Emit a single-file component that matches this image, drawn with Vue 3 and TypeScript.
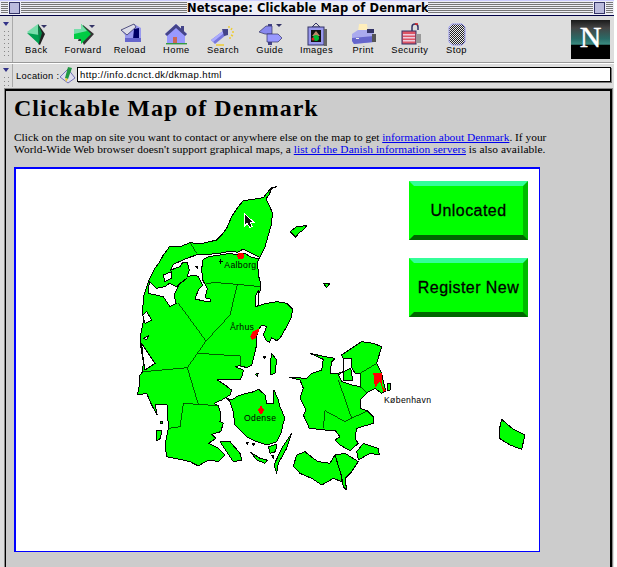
<script setup lang="ts">
const tools: string[] = ['Back', 'Forward', 'Reload', 'Home', 'Search', 'Guide', 'Images', 'Print', 'Security', 'Stop']
</script>

<template>
  <div class="screen">
    <div class="window">
      <header class="titlebar">
        <div class="stripes left"><span class="box"></span></div>
        <div class="title">Netscape: Clickable Map of Denmark</div>
        <div class="stripes right"><span class="box zoom"></span></div>
      </header>

      <section class="toolbar">
        <div class="grip"><i></i></div>
        <div class="tools">
          <div v-for="t in tools" :key="t" class="tool">
            <svg class="icon" viewBox="0 0 26 24" width="26" height="24">
              <defs>
                <pattern id="chk" width="2" height="2" patternUnits="userSpaceOnUse">
                  <rect width="2" height="2" fill="#eee" />
                  <rect width="1" height="1" fill="#222" />
                  <rect x="1" y="1" width="1" height="1" fill="#222" />
                </pattern>
              </defs>
              <g v-if="t === 'Back'">
                <polygon points="15,1 22,11 17,22 15,21" fill="#222" />
                <polygon points="4,9 15,1 16,21" fill="#77ddaa" />
                <polygon points="4,10 16,21 16,12" fill="#00a050" />
                <polygon points="15,1 19,10 16,20" fill="#008844" />
                <polygon points="18,2 24,2 21,5" fill="#333366" />
              </g>
              <g v-else-if="t === 'Forward'">
                <polygon points="13,2 24,11 14,22 12,18 8,18" fill="#333" />
                <polygon points="4,6 11,6 11,1 21,11 11,21 11,16 4,16" fill="#00cc44" />
                <polygon points="4,6 11,6 11,1 17,8 4,11" fill="#77ddaa" />
                <polygon points="19,2 25,2 22,5" fill="#333366" />
              </g>
              <g v-else-if="t === 'Reload'">
                <polygon points="4,7 17,1 24,5 24,19 8,19 8,12" fill="#9999ee" />
                <polygon points="4,7 17,1 19,4 10,12" fill="#dddde8" stroke="#333366" stroke-width=".8" />
                <polygon points="17,6 22,5 22,16 16,16" fill="#000066" />
                <rect x="8" y="15" width="16" height="4" fill="#6666cc" />
              </g>
              <g v-else-if="t === 'Home'">
                <polygon points="13,1 24,11 22,13 22,21 4,21 4,13 2,11" fill="#9999ff" />
                <polygon points="13,1 24,11 22,13 13,5 4,13 2,11" fill="#444488" />
                <rect x="18" y="3" width="3" height="5" fill="#444488" />
                <rect x="10" y="14" width="4" height="7" fill="#cc6655" />
                <rect x="3" y="20" width="21" height="1.4" fill="#339944" />
              </g>
              <g v-else-if="t === 'Search'">
                <polygon points="1,17 13,8 16,12 5,21" fill="#7777dd" />
                <polygon points="1,17 13,8 14,10 3,19" fill="#aaaaff" />
                <polygon points="12,6 18,6 18,12 14,13" fill="#444488" />
                <path d="M19 3v2M22 5l-1 2M24 9h-2M23 13l-2-1M20 16v-2M6 22h8" stroke="#eecc33" stroke-width="1.4" fill="none" />
              </g>
              <g v-else-if="t === 'Guide'">
                <rect x="11" y="1" width="4" height="21" fill="#444488" />
                <polygon points="2,9 9,3 15,3 15,11 8,11" fill="#8888ee" stroke="#333366" stroke-width=".7" />
                <polygon points="10,11 21,11 25,15 21,19 10,19" fill="#9999ff" stroke="#333366" stroke-width=".7" />
                <polygon points="19,1 25,1 22,4" fill="#333366" />
              </g>
              <g v-else-if="t === 'Images'">
                <polygon points="9,4 13,0 17,4" fill="none" stroke="#333366" />
                <rect x="5" y="4" width="16" height="18" fill="#9999ee" stroke="#333366" />
                <rect x="21" y="6" width="3" height="17" fill="#666" />
                <rect x="8" y="7" width="10" height="12" fill="#111" />
                <polygon points="9,13 13,8 17,13" fill="#bb8866" />
                <circle cx="13" cy="15" r="3" fill="#00bb33" />
                <circle cx="10" cy="16" r="1.5" fill="#dd2222" />
              </g>
              <g v-else-if="t === 'Print'">
                <polygon points="9,1 17,1 18,9 8,9" fill="#ffeebb" />
                <polygon points="2,11 8,7 20,7 24,11 24,19 4,21 2,18" fill="#aaaaee" />
                <polygon points="2,15 24,13 24,19 4,21 2,18" fill="#6666cc" />
                <rect x="17" y="6" width="7" height="4" fill="#333366" />
                <rect x="22" y="11" width="4" height="8" fill="#555" />
                <rect x="6" y="15" width="3" height="1" fill="#eee" />
              </g>
              <g v-else-if="t === 'Security'">
                <path d="M15 8V4a3 3 0 0 1 6 0v3" fill="none" stroke="#333366" stroke-width="1.5" />
                <path d="M18 1h3" stroke="#dd2222" stroke-width="1.5" />
                <rect x="5" y="8" width="14" height="13" fill="#dd5566" stroke="#333366" />
                <rect x="6" y="11" width="12" height="1.5" fill="#eeccdd" />
                <rect x="6" y="14" width="12" height="1.5" fill="#eeccdd" />
                <rect x="6" y="17" width="12" height="1.5" fill="#eeccdd" />
                <rect x="19" y="11" width="5" height="9" fill="#999" />
              </g>
              <g v-else>
                <polygon points="8,1 18,1 21,4 21,19 18,22 8,22 5,19 5,4" fill="url(#chk)" stroke="#9999ee" />
              </g>
            </svg>
            <span class="label">{{ t }}</span>
          </div>
        </div>
        <div class="logo">
          <span>N</span>
        </div>
      </section>

      <section class="location">
        <div class="grip small"><i></i></div>
        <label class="loc-label">Location :</label>
        <svg class="loc-icon" viewBox="0 0 18 18" width="18" height="18">
          <polygon points="1,11 9,3 16,12 9,17" fill="#ddddee" stroke="#5555aa" stroke-width=".8" />
          <polygon points="9,1 13,2 9,13 6,12" fill="#229944" />
          <polygon points="6,12 9,13 7,16" fill="#eecc33" />
        </svg>
        <div class="url">http://info.dcnct.dk/dkmap.html</div>
      </section>

      <main class="frame">
        <h1>Clickable Map of Denmark</h1>
        <p>
          Click on the map on site you want to contact or anywhere else on the map to get
          <a href="#">information about Denmark</a>. If your<br />
          <span class="second">World-Wide Web browser doesn't support graphical maps, a
          <a href="#">list of the Danish information servers</a> is also available.</span>
        </p>

        <div class="mapbox">
          <svg class="map" viewBox="-342 -18 1569 1146" width="523" height="382" shape-rendering="crispEdges">
            <g class="land">
              <!-- Jutland -->
              <polygon points="440,35 425,40 418,58 408,72 420,95 427,115 425,145 415,180 405,215 390,245 383,260 385,300 392,325 392,345 380,365 375,385 385,392 410,385 440,380 470,385 488,402 483,430 470,455 450,490 440,497 425,488 418,502 408,496 400,480 410,455 395,450 385,465 378,490 380,510 375,530 365,570 350,578 330,572 315,575 340,585 338,600 330,615 300,612 262,615 285,630 305,645 300,660 275,675 252,685 265,692 272,715 270,740 280,745 272,770 245,778 258,790 235,805 265,820 285,840 265,860 240,855 222,862 205,873 180,860 160,855 110,845 105,810 115,760 112,690 105,688 75,688 82,720 65,690 50,655 22,660 28,630 30,600 38,590 40,560 30,500 30,490 40,440 38,400 42,360 55,320 75,280 88,262 100,240 120,213 150,215 180,203 210,207 260,195 275,180 290,160 305,125 325,95 340,77 370,73 400,68 410,55 425,38" />
              <!-- Laesø, Anholt -->
              <polygon points="480,170 500,155 530,152 520,165 505,175 498,187" />
              <polygon points="580,325 600,325 590,338" />
              <g transform="translate(0 480)">
                <!-- Fyn -->
                <polygon points="290,190 305,195 325,182 350,175 372,170 385,162 405,180 410,205 430,205 432,165 445,195 450,215 465,250 458,270 455,290 440,320 410,330 380,320 350,305 330,285 315,270 312,250 310,230 300,200" />
                <!-- Langeland -->
                <polygon points="485,295 470,340 445,385 440,415 432,390 455,340 478,305" />
                <polygon points="362,352 390,370 412,375 405,385 380,375" />
                <polygon points="415,335 440,328 437,350 420,355" />
                <polygon points="270,320 300,320 330,355 335,375 310,380 290,350" />
                <polygon points="425,55 440,75 435,115 420,120 420,90" />
                <polygon points="80,285 95,285 92,310 78,318" />
                <polygon points="90,258 98,258 98,265 90,265" />
                <polygon points="400,65 408,65 405,70" />
                <polygon points="375,118 385,115 382,124" />
                <polygon points="348,322 355,322 352,328" />
                <polygon points="366,325 374,325 370,332" />
                <polygon points="425,362 432,362 430,370" />
              </g>
              <g transform="translate(450 465)">
                <!-- Sjælland -->
                <polygon points="28,142 60,150 70,175 60,205 78,240 70,255 88,295 135,300 165,300 180,320 165,330 180,345 210,362 235,340 225,325 230,295 280,280 280,260 262,242 240,235 240,210 265,185 285,175 305,190 318,183 310,155 305,130 290,100 305,50 280,40 245,35 185,75 190,85 190,125 175,130 150,130 155,95 165,85 135,80 90,70 130,88 125,120 95,130 80,145" />
                <!-- Lolland -->
                <polygon points="40,408 50,375 75,365 100,385 115,395 150,400 165,375 185,430 185,455 160,445 125,465 95,445 60,430" />
                <!-- Falster -->
                <polygon points="165,375 195,370 235,395 215,425 195,445 200,480 190,470 185,440" />
                <!-- Møn -->
                <polygon points="230,365 250,340 295,355 298,375 270,370 235,390" />
                <polygon points="322,160 332,160 330,182 322,180" />
                <!-- Bornholm -->
                <polygon points="665,268 700,298 735,315 725,358 690,345 658,325 660,290" />
              </g>
            </g>

            <g class="water">
              <!-- Limfjord -->
              <polygon points="388,247 365,235 340,222 322,232 300,228 270,235 235,238 205,238 170,250 130,268 122,285 150,275 158,262 172,262 178,285 172,305 195,300 205,305 218,330 205,345 195,372 222,378 240,378 240,372 225,368 232,340 218,315 215,285 218,255 235,245 270,240 300,235 322,240 345,235 360,245 385,252" />
              <polygon points="100,300 125,290 125,310 105,320" />
              <polygon points="58,320 55,355 100,365 120,395 138,385 132,360 150,325 170,310 140,335 118,325 105,335 80,340" />
              <polygon points="38,420 45,445 65,435 50,410" />
              <polygon points="40,490 55,483 50,495" />
              <polygon points="35,505 75,565 45,585 38,540" />
              <polygon points="375,365 385,345 385,392 378,395" />
              <g transform="translate(450 465)">
                <polygon points="190,85 215,85 215,112 225,130 240,130 240,170 215,165 200,160 185,155 175,135 190,125" />
              </g>
            </g>

            <g class="land">
              <g transform="translate(450 465)">
                <polygon points="190,125 212,115 218,150 190,150" />
              </g>
              <polygon points="197,275 203,275 203,282" />
            </g>

            <g class="border">
              <path d="M180,203 L200,235 M145,385 L228,498 L300,420 L322,328 L250,322 L225,328 M322,328 L390,335 M228,498 L172,578 M205,535 L330,543 L330,575 M172,578 L40,590 M172,578 L205,688 L160,685 L150,755 L115,760 M205,688 L265,692" />
              <g transform="translate(450 465)">
                <path d="M175,150 L215,265 M240,130 L290,100 M240,130 L240,170 L260,187 M135,242 L195,275 L262,242 M135,242 L130,295" />
              </g>
            </g>

            <g class="red">
              <circle cx="332" cy="243" r="10" />
              <polygon points="360,485 370,468 390,460 378,488 366,495" />
              <polygon points="393,692 403,706 393,718 383,706" />
              <g transform="translate(450 465)">
                <polygon points="280,130 305,130 305,165 318,183 310,185 300,155 285,172 282,150" />
              </g>
            </g>

            <g class="names">
              <path d="M272,252 v14 M266,258 h12" stroke="#000" stroke-width="3" />
              <text x="283" y="279">Aalborg</text>
              <text x="300" y="466">Århus</text>
              <text x="342" y="737">Odense</text>
              <text x="762" y="683">København</text>
            </g>

            <polygon class="cursor" points="342,115 342,155 351,145 360,158 367,154 360,142 372,142" />
          </svg>

          <div class="buttons">
            <a class="mapbtn" href="#">Unlocated</a>
            <a class="mapbtn" href="#">Register New</a>
          </div>
        </div>
      </main>
    </div>
  </div>
</template>

<style scoped>
.screen {
  width: 617px;
  height: 567px;
  overflow: hidden;
  background: #fff;
  font-family: "Liberation Sans", sans-serif;
}
.window {
  width: 614px;
  height: 567px;
  display: flex;
  flex-direction: column;
  background: #dddddd;
}
.titlebar {
  height: 16px;
  flex: none;
  display: flex;
  background: #eeeef6;
  border-top: 1px solid #ccccff;
  border-bottom: 1px solid #000044;
  box-sizing: border-box;
}
.stripes {
  height: 12px;
  margin-top: 1px;
  background: repeating-linear-gradient(to bottom, #777 0 1px, #eeeef6 1px 2px);
  position: relative;
}
.stripes.left {
  width: 186px;
  margin-left: 1px;
}
.stripes.right {
  width: 186px;
  flex: 1;
  margin-right: 1px;
}
.box {
  position: absolute;
  left: 8px;
  top: 0;
  width: 9px;
  height: 10px;
  background: #bbbbdd;
  border: 1px solid #333366;
  box-shadow: 0 0 0 1px #eeeef6;
}
.box.zoom {
  left: auto;
  right: 8px;
}
.title {
  width: 241px;
  flex: none;
  text-align: center;
  font-size: 11.5px;
  line-height: 14px;
  font-weight: 700;
  font-family: "DejaVu Sans", sans-serif;
  letter-spacing: 0.1px;
  color: #000;
  white-space: nowrap;
}
.toolbar {
  height: 46px;
  flex: none;
  display: flex;
  align-items: flex-start;
  border-bottom: 1px solid #999;
  box-shadow: 0 1px 0 #fff;
  position: relative;
}
.grip {
  width: 12px;
  height: 100%;
  flex: none;
  border-right: 1px solid #aaa;
  position: relative;
  background:
    repeating-linear-gradient(to bottom, transparent 0 2px, #888 2px 3px, transparent 3px 4px) 4px 13px / 1px 28px no-repeat,
    repeating-linear-gradient(to bottom, transparent 0 2px, #888 2px 3px, transparent 3px 4px) 8px 13px / 1px 28px no-repeat;
}
.grip i {
  position: absolute;
  left: 3px;
  top: 6px;
  border-left: 3px solid transparent;
  border-right: 3px solid transparent;
  border-top: 4px solid #333388;
}
.grip.small {
  background:
    repeating-linear-gradient(to bottom, transparent 0 2px, #888 2px 3px, transparent 3px 4px) 4px 11px / 1px 12px no-repeat,
    repeating-linear-gradient(to bottom, transparent 0 2px, #888 2px 3px, transparent 3px 4px) 8px 11px / 1px 12px no-repeat;
}
.grip.small i {
  top: 4px;
}
.tools {
  display: flex;
  flex: none;
}
.tool {
  width: 46.7px;
  display: flex;
  flex-direction: column;
  align-items: center;
  padding-top: 7px;
}
.icon {
  display: block;
}
.label {
  font-size: 9.3px;
  line-height: 12px;
  margin-top: -3px;
  letter-spacing: 0.45px;
  color: #000;
  white-space: nowrap;
}
.logo {
  position: absolute;
  left: 571px;
  top: 4px;
  width: 39px;
  height: 39px;
  overflow: hidden;
  background: linear-gradient(to bottom, #1a1a1a 0, #444 20%, #2a6a66 48%, #3a8a80 62%, #000 65%);
  text-align: center;
}
.logo span {
  display: block;
  font-family: "Liberation Serif", serif;
  font-weight: 400;
  font-size: 30px;
  line-height: 34px;
  color: #fff;
  -webkit-text-stroke: 0.4px #fff;
}
.location {
  height: 23px;
  flex: none;
  margin-top: 1px;
  display: flex;
  align-items: flex-start;
  box-sizing: border-box;
}
.loc-label {
  font-size: 9.3px;
  line-height: 12px;
  letter-spacing: 0.3px;
  margin: 6px 0 0 3px;
  white-space: nowrap;
  width: 43px;
  flex: none;
}
.loc-icon {
  margin-top: 2px;
  flex: none;
}
.url {
  width: 534px;
  height: 15px;
  margin: 3px 0 0 0;
  background: #fff;
  border: 1px solid #000;
  box-shadow: 1px 1px 0 #777;
  box-sizing: border-box;
  font-size: 9.5px;
  line-height: 14px;
  padding-left: 2px;
  letter-spacing: 0.42px;
  white-space: nowrap;
}
.frame {
  flex: 1;
  min-height: 0;
  margin: 2px 2px 0 5px;
  background: #cccccc;
  border: 1px solid #000;
  border-width: 2px 2px 0 1px;
  box-sizing: border-box;
  padding: 0 0 0 8px;
  outline: 1px solid #888;
  font-family: "Liberation Serif", serif;
}
h1 {
  margin: 4px 0 0;
  font-family: "Liberation Serif", serif;
  font-size: 24px;
  line-height: 27px;
  font-weight: 700;
  letter-spacing: 1px;
  color: #000;
  white-space: nowrap;
}
p {
  margin: 9px 0 0;
  font-size: 11.4px;
  line-height: 12px;
  color: #000;
  white-space: nowrap;
}
.second {
  letter-spacing: 0.06px;
}
a {
  color: #0000ee;
}
.mapbox {
  position: relative;
  width: 526px;
  height: 385px;
  margin-top: 12px;
  box-sizing: border-box;
  background: #fff;
  border: 1px solid #0000ff;
  border-width: 2px 1px 1px 2px;
}
.map {
  display: block;
}
.land polygon {
  fill: #00ff00;
  stroke: #000;
  stroke-width: 3;
  stroke-linejoin: round;
}
.water polygon {
  fill: #fff;
  stroke: #000;
  stroke-width: 3;
}
.border path {
  fill: none;
  stroke: #003300;
  stroke-width: 2.4;
}
.red circle,
.red polygon {
  fill: #ff0000;
}
.names text {
  font-family: "Liberation Sans", sans-serif;
  font-size: 26px;
  letter-spacing: 1px;
  fill: #000;
  shape-rendering: auto;
}
.cursor {
  fill: #111;
  stroke: #fff;
  stroke-width: 3;
}
.buttons {
  position: absolute;
  left: 393px;
  top: 12px;
  display: flex;
  flex-direction: column;
  gap: 18px;
}
.mapbtn {
  width: 119px;
  height: 59px;
  box-sizing: border-box;
  display: flex;
  align-items: center;
  justify-content: center;
  background: #00ff00;
  border-style: solid;
  border-width: 5px;
  border-color: #33ff99 #00bb00 #006600 #00ff00;
  color: #000;
  text-decoration: none;
  font-family: "Liberation Sans", sans-serif;
  font-size: 16px;
  letter-spacing: 0.45px;
  white-space: nowrap;
  -webkit-text-stroke: 0.3px #000;
}
</style>
